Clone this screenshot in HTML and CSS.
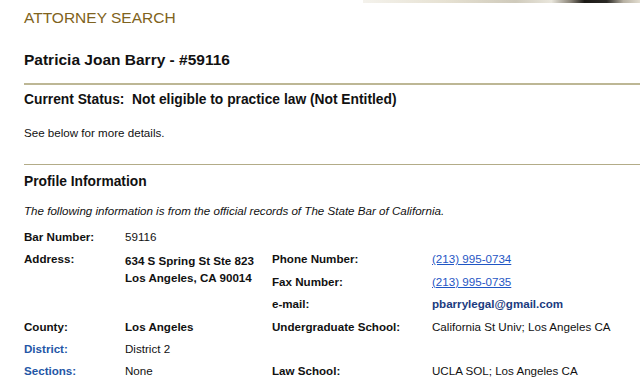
FILE: index.html
```html
<!DOCTYPE html>
<html lang="en">
<head>
  <meta charset="UTF-8" />
  <title>Attorney Search</title>
  <link rel="stylesheet" href="styles.css">
</head>
<body>

  <div class="banner-edge"></div>

  <main class="attorney-page">
    <h1 class="page-title">ATTORNEY SEARCH</h1>

    <section class="attorney-head">
      <h2>Patricia Joan Barry - #59116</h2>
    </section>

    <section class="attorney-status">
      <h3>Current Status:&nbsp; Not eligible to practice law (Not Entitled)</h3>
      <p>See below for more details.</p>
    </section>

    <section class="profile">
      <h3>Profile Information</h3>
      <p class="profile-note">The following information is from the official records of The State Bar of California.</p>

      <div class="profile-grid">
        <div class="label">Bar Number:</div>
        <div class="value">59116</div>
        <div class="spacer"></div>

        <div class="label">Address:</div>
        <div class="value address">634 S Spring St Ste 823<br>Los Angeles, CA 90014</div>
        <div class="label">Phone Number:</div>
        <div class="value"><a href="#">(213) 995-0734</a></div>
        <div class="label col-3">Fax Number:</div>
        <div class="value"><a href="#">(213) 995-0735</a></div>
        <div class="label col-3">e-mail:</div>
        <div class="value email">pbarrylegal@gmail.com</div>

        <div class="label">County:</div>
        <div class="value strong">Los Angeles</div>
        <div class="label">Undergraduate School:</div>
        <div class="value">California St Univ; Los Angeles CA</div>

        <div class="label blue">District:</div>
        <div class="value">District 2</div>
        <div class="spacer"></div>

        <div class="label blue">Sections:</div>
        <div class="value">None</div>
        <div class="label">Law School:</div>
        <div class="value">UCLA SOL; Los Angeles CA</div>
      </div>
    </section>
  </main>

</body>
</html>
```

FILE: styles.css
```css
* {
  box-sizing: border-box;
  margin: 0;
  padding: 0;
}

body {
  font-family: "Liberation Sans", Arial, sans-serif;
  background: #ffffff;
  color: #111111;
  overflow: hidden;
}

/* thin edge of the header photo */
.banner-edge {
  height: 3px;
  margin-left: 363px;
  background: linear-gradient(to right,
    #f4f2ec 0%,
    #e6e1d2 30%,
    #cfcabb 55%,
    #e9e6dc 68%,
    #8a8478 75%,
    #1c1a16 80%,
    #2a2824 88%,
    #b6b0a2 94%,
    #e2ddd0 100%);
}

.attorney-page {
  padding-left: 24px;
}

.page-title {
  font-size: 15.5px;
  font-weight: normal;
  color: #7f6320;
  margin-top: 6px;
  line-height: 18px;
}

.attorney-head {
  border-bottom: 2px solid #bdb795;
  padding: 24px 0 14px;
}

.attorney-head h2 {
  font-size: 15.5px;
  line-height: 18px;
}

.attorney-status {
  border-bottom: 1px solid #b3ac88;
  padding: 6px 0 24px;
}

.attorney-status h3 {
  font-size: 13.8px;
  line-height: 18px;
}

.attorney-status p,
.profile-note {
  font-size: 11.6px;
  line-height: 14px;
  margin-top: 17px;
}

.profile {
  padding-top: 8px;
}

.profile h3 {
  font-size: 13.8px;
  line-height: 18px;
}

.profile-note {
  font-style: italic;
  margin-top: 13px;
}

.profile-grid {
  display: grid;
  grid-template-columns: 101px 147px 160px 1fr;
  grid-auto-rows: 22.4px;
  margin-top: 12px;
  font-size: 11.6px;
  line-height: 14px;
}

.label {
  font-weight: bold;
}

.label.blue {
  color: #2456a6;
}

.col-3 {
  grid-column: 3;
}

.spacer {
  grid-column: 3 / 5;
}

.value a {
  color: #1f56c4;
}

.address {
  grid-row: span 3;
  font-weight: bold;
  line-height: 17px;
}

.strong {
  font-weight: bold;
}

.email {
  color: #1b3b80;
  font-weight: bold;
}
```
